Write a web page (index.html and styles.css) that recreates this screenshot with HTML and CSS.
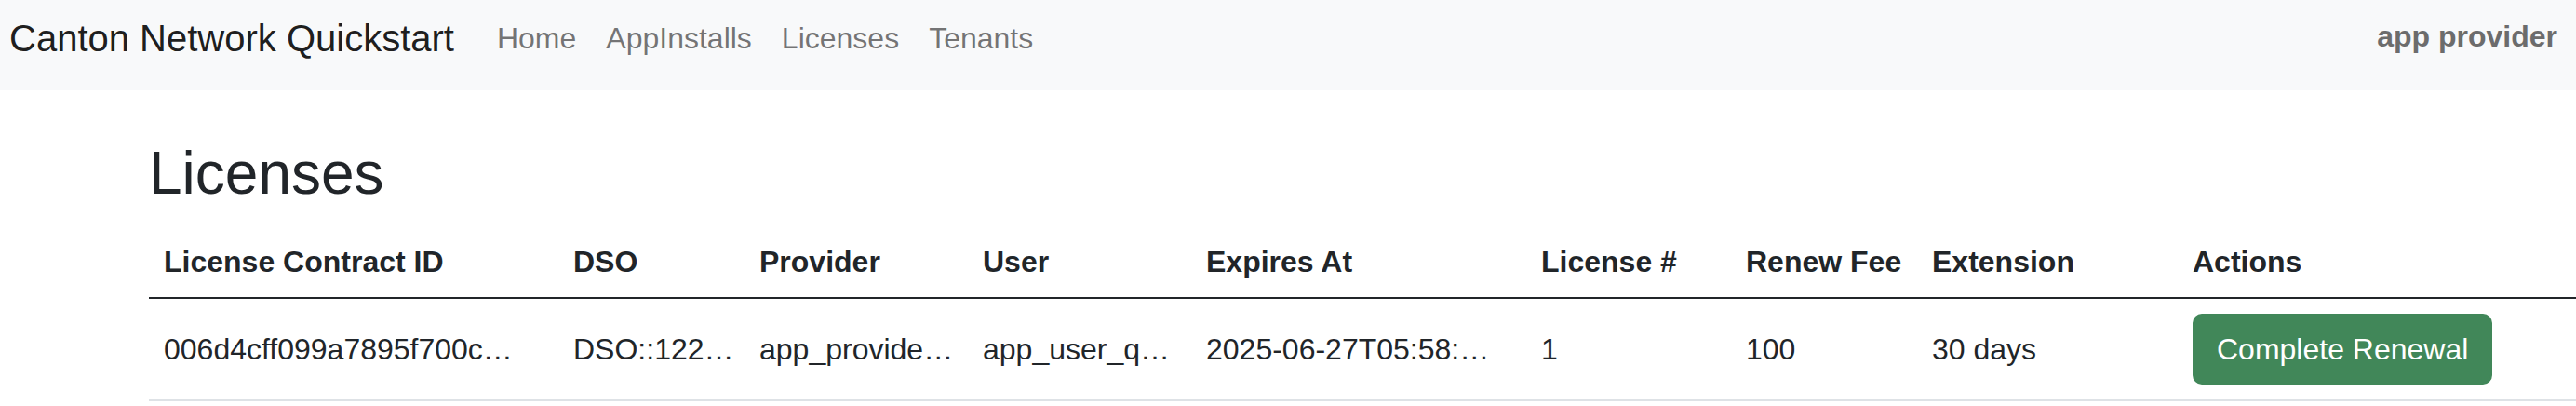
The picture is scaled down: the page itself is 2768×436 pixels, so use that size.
FILE: index.html
```html
<!DOCTYPE html>
<html lang="en">
<head>
<meta charset="utf-8">
<title>Canton Network Quickstart</title>
<link rel="stylesheet" href="styles.css">
</head>
<body>
<nav class="navbar">
  <a class="brand" href="#">Canton Network Quickstart</a>
  <ul class="nav">
    <li><a class="nav-link" href="#">Home</a></li>
    <li><a class="nav-link" href="#">AppInstalls</a></li>
    <li><a class="nav-link" href="#">Licenses</a></li>
    <li><a class="nav-link" href="#">Tenants</a></li>
  </ul>
  <span class="user">app provider</span>
</nav>
<main class="main">
  <h2 class="title">Licenses</h2>
  <table class="table">
    <colgroup>
      <col class="c1"><col class="c2"><col class="c3"><col class="c4"><col class="c5"><col class="c6"><col class="c7"><col class="c8"><col class="c9">
    </colgroup>
    <thead>
      <tr>
        <th>License Contract ID</th>
        <th>DSO</th>
        <th>Provider</th>
        <th>User</th>
        <th>Expires At</th>
        <th>License #</th>
        <th>Renew Fee</th>
        <th>Extension</th>
        <th>Actions</th>
      </tr>
    </thead>
    <tbody>
      <tr>
        <td>006d4cff099a7895f700c…</td>
        <td>DSO::122…</td>
        <td>app_provide…</td>
        <td>app_user_q…</td>
        <td>2025-06-27T05:58:…</td>
        <td>1</td>
        <td>100</td>
        <td>30 days</td>
        <td><button class="btn-success" type="button">Complete Renewal</button></td>
      </tr>
    </tbody>
  </table>
</main>
</body>
</html>
```

FILE: styles.css
```css
html, body {
  margin: 0;
  padding: 0;
}
body {
  font-family: "Liberation Sans", Arial, sans-serif;
  font-size: 32px;
  line-height: 48px;
  color: #212529;
  background: #ffffff;
  overflow: hidden;
}
.navbar {
  display: flex;
  align-items: center;
  height: 97px;
  box-sizing: border-box;
  padding: 11px 20px 26px 10px;
  background: #f8f9fa;
}
.brand {
  font-size: 40px;
  line-height: 60px;
  color: rgba(0, 0, 0, 0.9);
  text-decoration: none;
  margin-right: 30px;
  white-space: nowrap;
}
.nav {
  display: flex;
  list-style: none;
  margin: 0;
  padding: 0;
  flex: 1;
}
.nav-link {
  display: block;
  padding: 0 16px;
  font-size: 32px;
  line-height: 48px;
  color: rgba(0, 0, 0, 0.55);
  text-decoration: none;
}
.user {
  font-weight: bold;
  font-size: 32px;
  line-height: 48px;
  color: #6c6c6c;
  margin-bottom: 4px;
}
.main {
  padding: 51px 0 0 160px;
}
.title {
  margin: 0 0 16px 0;
  font-size: 64px;
  line-height: 76.8px;
  font-weight: 500;
  color: #212529;
}
.table {
  width: 100%;
  border-collapse: collapse;
  table-layout: fixed;
}
.c1 { width: 440px; }
.c2 { width: 200px; }
.c3 { width: 240px; }
.c4 { width: 240px; }
.c5 { width: 360px; }
.c6 { width: 220px; }
.c7 { width: 200px; }
.c8 { width: 280px; }
.table th {
  text-align: left;
  font-weight: bold;
  padding: 16px 16px 14px 16px;
  border-bottom: 2px solid #212529;
  vertical-align: middle;
  white-space: nowrap;
}
.table td {
  padding: 16px;
  border-bottom: 2px solid #dee2e6;
  vertical-align: middle;
  white-space: nowrap;
  overflow: hidden;
}
.btn-success {
  font-family: inherit;
  font-size: 32px;
  line-height: 48px;
  padding: 12px 24px;
  border: 2px solid #418759;
  border-radius: 10px;
  background: #418759;
  color: #ffffff;
  cursor: pointer;
}
```
